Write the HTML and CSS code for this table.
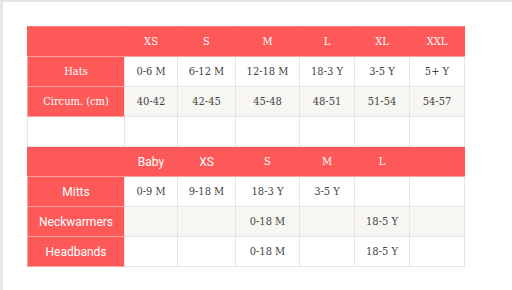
FILE: index.html
```html
<!DOCTYPE html>
<html lang="en">
<head>
    <meta charset="UTF-8">
    <meta name="viewport" content="width=device-width, initial-scale=1.0">
    <title>Size Chart</title>
    <link rel="stylesheet" href="styles.css">
</head>
<body>
    <div class="page">
        <table class="size-chart">
            <colgroup>
                <col class="col-label">
                <col class="col-a">
                <col class="col-b">
                <col class="col-c">
                <col class="col-d">
                <col class="col-e">
                <col class="col-f">
            </colgroup>
            <tr class="head-row">
                <th></th>
                <th>XS</th>
                <th>S</th>
                <th>M</th>
                <th>L</th>
                <th>XL</th>
                <th>XXL</th>
            </tr>
            <tr>
                <th class="row-head">Hats</th>
                <td>0-6 M</td>
                <td>6-12 M</td>
                <td>12-18 M</td>
                <td>18-3 Y</td>
                <td>3-5 Y</td>
                <td>5+ Y</td>
            </tr>
            <tr class="striped">
                <th class="row-head">Circum. (cm)</th>
                <td>40-42</td>
                <td>42-45</td>
                <td>45-48</td>
                <td>48-51</td>
                <td>51-54</td>
                <td>54-57</td>
            </tr>
            <tr>
                <td></td>
                <td></td>
                <td></td>
                <td></td>
                <td></td>
                <td></td>
                <td></td>
            </tr>
            <tr class="head-row">
                <th></th>
                <th class="sans">Baby</th>
                <th class="sans">XS</th>
                <th>S</th>
                <th>M</th>
                <th>L</th>
                <th></th>
            </tr>
            <tr>
                <th class="row-head sans">Mitts</th>
                <td>0-9 M</td>
                <td>9-18 M</td>
                <td>18-3 Y</td>
                <td>3-5 Y</td>
                <td></td>
                <td></td>
            </tr>
            <tr class="striped">
                <th class="row-head sans">Neckwarmers</th>
                <td></td>
                <td></td>
                <td>0-18 M</td>
                <td></td>
                <td>18-5 Y</td>
                <td></td>
            </tr>
            <tr>
                <th class="row-head sans">Headbands</th>
                <td></td>
                <td></td>
                <td>0-18 M</td>
                <td></td>
                <td>18-5 Y</td>
                <td></td>
            </tr>
        </table>
    </div>
</body>
</html>
```

FILE: styles.css
```css
/* Page frame */
html, body {
    margin: 0;
    padding: 0;
    background: #ffffff;
}
body {
    font-family: "Roboto Slab", "DejaVu Serif Condensed", "DejaVu Serif", serif;
    color: #444444;
}
.page {
    height: 290px;
    box-sizing: border-box;
    border-top: 2px solid #e2e2e2;
    border-left: 3px solid #e6e6e6;
    padding: 24px 0 0 24px;
}

/* Size chart table */
.size-chart {
    border-collapse: collapse;
    table-layout: fixed;
    width: 437px;
    font-size: 11px;
}
.col-label { width: 97px; }
.col-a { width: 53px; }
.col-b { width: 58px; }
.col-c { width: 64px; }
.col-d { width: 55px; }
.col-e { width: 55px; }
.col-f { width: 55px; }

.size-chart td,
.size-chart th {
    height: 29px;
    padding: 0;
    text-align: center;
    vertical-align: middle;
    border: 1px solid #e6e6e6;
}
.size-chart th {
    font-weight: normal;
    color: #ffffff;
    background-color: #fd5959;
    border-color: #f7a3a3;
}
.head-row th {
    border-left-color: #fd5959;
    border-right-color: #fd5959;
    border-top-color: #f57a7a;
}
.row-head {
    border-right-color: #e6e6e6 !important;
}
.striped td {
    background-color: #f7f6f2;
}
.sans {
    font-family: Roboto, "Noto Sans", sans-serif;
    font-size: 12px;
}
```
